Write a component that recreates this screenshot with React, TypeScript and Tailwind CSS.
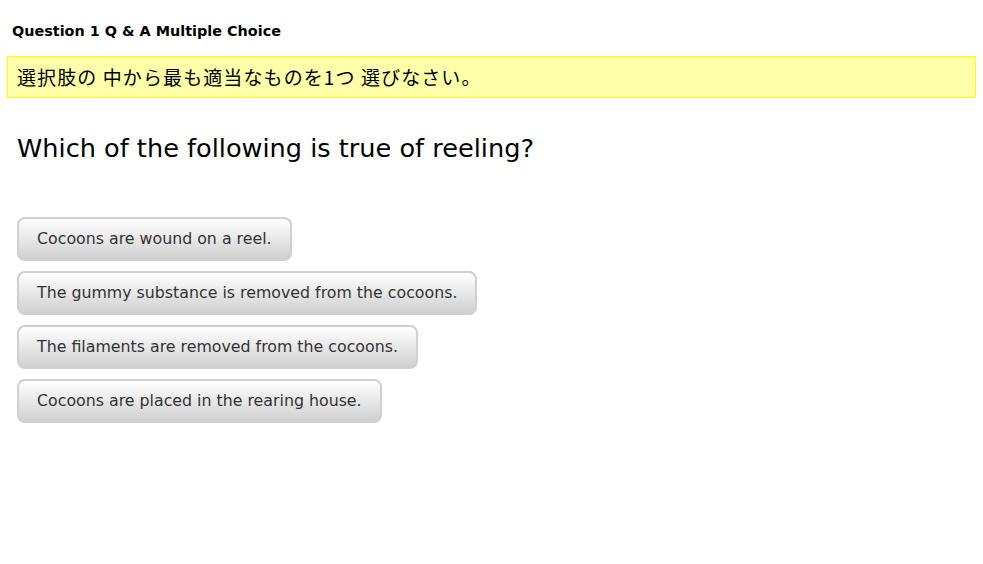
const choices = [
  "Cocoons are wound on a reel.",
  "The gummy substance is removed from the cocoons.",
  "The filaments are removed from the cocoons.",
  "Cocoons are placed in the rearing house.",
];

export default function App() {
  return (
    <div className="min-h-[564px] bg-white px-[7px] pt-[21px] font-['DejaVu_Sans',sans-serif] text-black">
      <h1 className="pl-[5px] text-[14.4px] font-bold leading-[20px]">
        Question 1 Q &amp; A Multiple Choice
      </h1>

      <div className="mt-[15px] border border-[#ffff00] bg-[#ffffaa] px-[9px] py-[7px] font-['Noto_Sans_CJK_JP',sans-serif] text-[19px] leading-[26px] tracking-[1.1px]">
        選択肢の 中から最も適当なものを1つ 選びなさい。
      </div>

      <div className="mt-[33px] pl-[10px] text-[25.6px] leading-[34px]">
        Which of the following is true of reeling?
      </div>

      <div className="mt-[52px] flex flex-col items-start gap-[10px] pl-[10px]">
        {choices.map((c) => (
          <button
            key={c}
            className="h-[44px] rounded-[8px] border-2 border-[#d0d0d0] bg-gradient-to-b from-white to-[#d0d0d0] px-[18px] text-[15.8px] text-[#333333]"
          >
            {c}
          </button>
        ))}
      </div>
    </div>
  );
}
